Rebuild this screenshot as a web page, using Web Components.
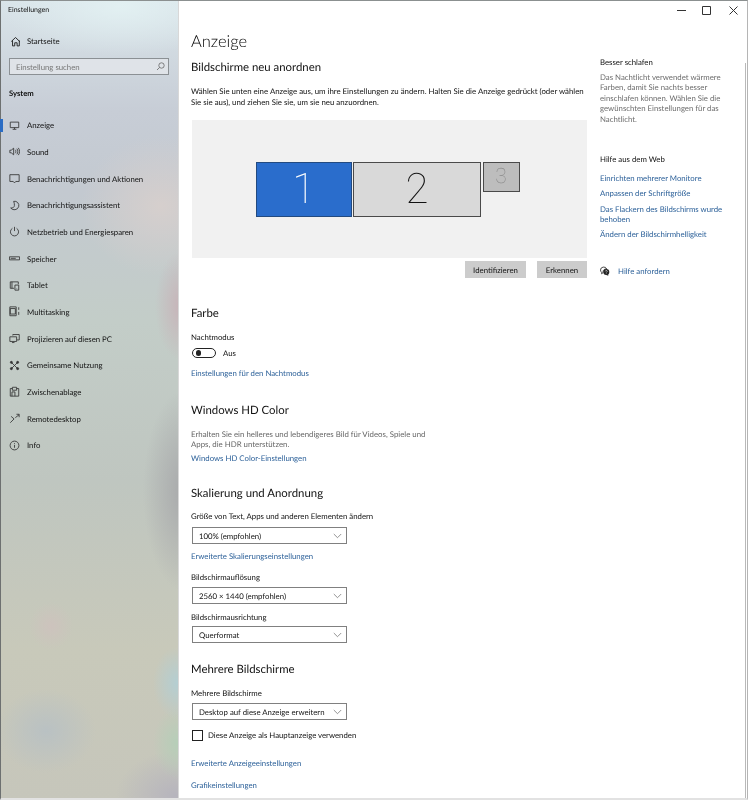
<!DOCTYPE html>
<html lang="de">
<head>
<meta charset="utf-8">
<title>Einstellungen</title>
<style>
  html, body { margin: 0; padding: 0; background: #fff; }
  body { width: 748px; height: 800px; overflow: hidden; font-family: Lato, "Open Sans", sans-serif; text-rendering: geometricPrecision; }
</style>
</head>
<body>
<settings-window>
  <side-nav slot="nav">
    <nav-item icon="display" active>Anzeige</nav-item>
    <nav-item icon="sound">Sound</nav-item>
    <nav-item icon="notify">Benachrichtigungen und Aktionen</nav-item>
    <nav-item icon="moon">Benachrichtigungsassistent</nav-item>
    <nav-item icon="power">Netzbetrieb und Energiesparen</nav-item>
    <nav-item icon="storage">Speicher</nav-item>
    <nav-item icon="tablet">Tablet</nav-item>
    <nav-item icon="multi">Multitasking</nav-item>
    <nav-item icon="project">Projizieren auf diesen PC</nav-item>
    <nav-item icon="share">Gemeinsame Nutzung</nav-item>
    <nav-item icon="clip">Zwischenablage</nav-item>
    <nav-item icon="remote">Remotedesktop</nav-item>
    <nav-item icon="info">Info</nav-item>
  </side-nav>

  <main-pane slot="main">
    <sec-title big style="margin-top:28px">Anzeige</sec-title>
    <sec-title style="margin-top:5px">Bildschirme neu anordnen</sec-title>
    <body-text style="margin-top:10px">Wählen Sie unten eine Anzeige aus, um ihre Einstellungen zu ändern. Halten Sie die Anzeige gedrückt (oder wählen Sie sie aus), und ziehen Sie sie, um sie neu anzuordnen.</body-text>
    <monitor-canvas style="margin-top:13px">
      <monitor-box w="95.5" h="55" active>1</monitor-box>
      <monitor-box w="128" h="55">2</monitor-box>
      <monitor-box w="37" h="30" dim>3</monitor-box>
    </monitor-canvas>
    <button-row style="margin-top:3px">
      <grey-button w="61">Identifizieren</grey-button>
      <grey-button w="50">Erkennen</grey-button>
    </button-row>

    <sec-title style="margin-top:26px">Farbe</sec-title>
    <field-label style="margin-top:8px">Nachtmodus</field-label>
    <toggle-switch style="margin-top:2px">Aus</toggle-switch>
    <text-link style="margin-top:6px">Einstellungen für den Nachtmodus</text-link>

    <sec-title style="margin-top:21px">Windows HD Color</sec-title>
    <body-text muted narrow style="margin-top:9.5px">Erhalten Sie ein helleres und lebendigeres Bild für Videos, Spiele und Apps, die HDR unterstützen.</body-text>
    <text-link style="margin-top:1.5px">Windows HD Color-Einstellungen</text-link>

    <sec-title style="margin-top:19px">Skalierung und Anordnung</sec-title>
    <field-label style="margin-top:7px">Größe von Text, Apps und anderen Elementen ändern</field-label>
    <drop-down style="margin-top:4px">100% (empfohlen)</drop-down>
    <text-link style="margin-top:5px">Erweiterte Skalierungseinstellungen</text-link>
    <field-label style="margin-top:7px">Bildschirmauflösung</field-label>
    <drop-down style="margin-top:3px">2560 × 1440 (empfohlen)</drop-down>
    <field-label style="margin-top:6px">Bildschirmausrichtung</field-label>
    <drop-down style="margin-top:2px">Querformat</drop-down>

    <sec-title style="margin-top:17px">Mehrere Bildschirme</sec-title>
    <field-label style="margin-top:8px">Mehrere Bildschirme</field-label>
    <drop-down style="margin-top:3px">Desktop auf diese Anzeige erweitern</drop-down>
    <check-box style="margin-top:8px">Diese Anzeige als Hauptanzeige verwenden</check-box>
    <text-link style="margin-top:14px">Erweiterte Anzeigeeinstellungen</text-link>
    <text-link style="margin-top:8px">Grafikeinstellungen</text-link>
  </main-pane>

  <help-pane slot="help"></help-pane>
</settings-window>

<script>
  const ICONS = {
    home: '<path d="M1.5 6.5 6.5 1.8l5 4.7M3 5.3v6.4h2.6V8h2.8v3.7H11V5.3"/>',
    display: '<path d="M1.5 2.5h10v6.5h-10zM6.5 9v1.7M4.3 11h4.4"/>',
    sound: '<path d="M1 5h1.6L5.5 2.6v7.8L2.6 8H1zM7.5 4.5c.8 1.2.8 2.8 0 4M9.3 3.2c1.5 2 1.5 4.6 0 6.6M11 2.2c2 2.6 2 6 0 8.6"/>',
    notify: '<path d="M1 2h11v8H8l-1.5 1.7L5 10H1z"/>',
    moon: '<path d="M5.5 1.6A5 5 0 0 1 11.4 8 5.4 5.4 0 0 1 2 9.4c2.4.4 4.2-.6 4.4-3 .1-1.8-.3-3.4-.9-4.8z"/>',
    power: '<path d="M4 2.8a4.8 4.8 0 1 0 5 0M6.5 1v5"/>',
    storage: '<path d="M.5 4.5h12v3.6H.5zM2 6.3h6"/>',
    tablet: '<path d="M6 9.8H1.5V2.2h9.5V5M3.5 9.8V2.2"/><path d="M7 6h4.5v6H7zM9 10.3h.6"/>',
    multi: '<path d="M1 1v10.5M8.5 1v10.5M1.5 3h6v6.5h-6zM1 1h7.5M1 11.5h7.5M11.5 1.5v3M11.5 7v3.5"/>',
    project: '<path d="M4.5 3V1.8h7.6v6.4H9.5M1 4.5h8v5.5H1zM3.5 11.3h3"/>',
    share: '<path d="M2.8 2.8l7.4 7.4M10.2 2.8l-7.4 7.4"/><circle cx="2.8" cy="2.8" r="1.2" fill="currentColor"/><circle cx="10.2" cy="2.8" r="1.2" fill="currentColor"/><circle cx="2.8" cy="10.2" r="1.2" fill="currentColor"/><circle cx="10.2" cy="10.2" r="1.2" fill="currentColor"/>',
    clip: '<path d="M4 3H1.5v9h10V3H9M4 1.5h5V5H4zM6 7H3.5v5M6 7h1v5"/>',
    remote: '<path d="M1.5 11.5l4.5-4.5M2.5 4l3.5 3M7.5 5.5 12 2M8.8 1.5H12V5"/>',
    info: '<circle cx="6.5" cy="6.5" r="5.2"/><path d="M6.5 5.8v3.4M6.5 3.8v1"/>'
  };

  function iconSvg(name, size = 11) {
    return `<svg width="${size}" height="${size}" viewBox="0 0 13 13" fill="none" stroke="currentColor" stroke-width="1">${ICONS[name]}</svg>`;
  }

  // small helper, every element below is the same shape: styles + markup
  function define(tag, css, html) {
    customElements.define(tag, class extends HTMLElement {
      connectedCallback() {
        if (this.shadowRoot) return;
        this.attachShadow({ mode: 'open' });
        this.shadowRoot.innerHTML = `<style>${css}</style>${typeof html === 'function' ? html(this) : html}`;
      }
    });
  }

  define('settings-window', `
    :host { display: flex; width: 748px; height: 800px; box-sizing: border-box; background: #fff; filter: blur(.3px);
            border-top: 1px solid #8b9090; border-left: 1px solid #6d7070; border-right: 1px solid #b5b5b5; border-bottom: 2px solid #e2e2e2; position: relative; }
    .content { flex: 1; display: flex; min-width: 0; }
    .controls { position: absolute; top: 4px; right: 0; display: flex; color: #333; }
    .controls span { width: 25px; height: 11px; display: flex; justify-content: center; align-items: center; }
    .scroll { position: absolute; right: 1px; top: 62px; bottom: 0; width: 1.5px; background: #b9b9b9; }
  `, `
    <slot name="nav"></slot>
    <div class="content"><slot name="main"></slot><slot name="help"></slot></div>
    <div class="controls">
      <span><svg width="9" height="9" viewBox="0 0 9 9" stroke="currentColor" fill="none"><path d="M0 4.5h9"/></svg></span>
      <span><svg width="9" height="9" viewBox="0 0 9 9" stroke="currentColor" fill="none"><path d="M.5.5h8v8h-8z"/></svg></span>
      <span style="width:28px"><svg width="9" height="9" viewBox="0 0 9 9" stroke="currentColor" fill="none"><path d="M.5.5l8 8M8.5.5l-8 8"/></svg></span>
    </div>
    <div class="scroll"></div>
  `);

  define('side-nav', `
    :host { display: flex; flex-direction: column; width: 178px; height: 100%; flex: none; color: #111;
            border-right: 1px solid #d8d8d8; box-sizing: border-box;
            background:
              radial-gradient(22px 24px at 50px 625px, #cdc3bd 0%, rgba(205,195,189,0) 100%),
              radial-gradient(24px 36px at 176px 682px, #b4ced2 0%, rgba(180,206,210,0) 100%),
              radial-gradient(24px 36px at 176px 742px, #b6ceb8 0%, rgba(182,206,184,0) 100%),
              radial-gradient(50px 42px at 45px 730px, #b9c1c3 0%, rgba(185,193,195,0) 100%),
              radial-gradient(60px 45px at 175px 795px, #b6b4bd 0%, rgba(182,180,189,0) 100%),
              radial-gradient(40px 100px at 182px 490px, #a8a9ab 0%, rgba(168,169,171,0) 100%),
              radial-gradient(26px 55px at 180px 305px, #c7b3b8 0%, rgba(199,179,184,0) 100%),
              radial-gradient(80px 70px at 160px 205px, #d6cfcd 0%, rgba(214,207,205,0) 100%),
              radial-gradient(120px 50px at 120px 5px, #e2f0f2 0%, rgba(226,240,242,0) 100%),
              linear-gradient(180deg, #d9e4e9 0, #c7cdd6 110px, #c3c9d0 190px, #c3cdc8 320px, #bfc6c0 480px, #c8c9ba 650px, #c6c6bb 800px); }
    .title { font-size: 7px; line-height: 12px; padding: 3px 0 0 7px; height: 15px; }
    .home { display: flex; align-items: center; height: 14px; margin-top: 15px; padding-left: 9px; gap: 6px; font-size: 7.8px; }
    .search { margin: 10px 0 0 8px; width: 160px; height: 17px; box-sizing: border-box; border: 1.5px solid #8b9094; background: #dfe3e8; display: flex; align-items: center; padding: 0 3px 0 6px; font-size: 7.8px; color: #777; justify-content: space-between; }
    .system { font-weight: 700; font-size: 7.7px; line-height: 12px; margin: 12px 0 0 8px; height: 12px; }
    .items { margin-top: 13px; display: flex; flex-direction: column; }
  `, () => `
    <div class="title">Einstellungen</div>
    <div class="home">${iconSvg('home', 11)}<span>Startseite</span></div>
    <div class="search"><span>Einstellung suchen</span><svg width="9" height="9" viewBox="0 0 9 9" fill="none" stroke="#666" stroke-width=".8"><circle cx="5.5" cy="3.5" r="2.7"/><path d="M3.5 5.5 1 8"/></svg></div>
    <div class="system">System</div>
    <div class="items"><slot></slot></div>
  `);

  define('nav-item', `
    :host { display: flex; align-items: center; height: 26.67px; font-size: 7.8px; position: relative; padding-left: 8px; color: #111; }
    :host([active])::before { content: ""; position: absolute; left: -1px; top: 6.5px; width: 2.5px; height: 13px; background: #2a6cc4; }
    .i { width: 11px; height: 11px; margin-right: 7px; color: #333; display: flex; }
    span { white-space: nowrap; }
  `, el => `<div class="i">${iconSvg(el.getAttribute('icon'))}</div><span><slot></slot></span>`);

  define('main-pane', `
    :host { display: flex; flex-direction: column; width: 396px; margin-left: 12px; flex: none; }
  `, `<slot></slot>`);

  define('sec-title', `
    :host { display: block; font-size: 11.4px; line-height: 18px; color: #111; white-space: nowrap; padding-top: 1px; margin-bottom: -1px; }
    :host([big]) { font-size: 16.5px; line-height: 24px; font-weight: 300; padding-top: 0; margin-bottom: 0; color: #000; }
  `, `<slot></slot>`);

  define('body-text', `
    :host { display: block; font-size: 7.85px; line-height: 10.6px; color: #111; }
    :host([muted]) { color: #666; }
    :host([narrow]) { width: 245px; }
  `, `<slot></slot>`);

  define('field-label', `
    :host { display: block; font-size: 7.8px; line-height: 14px; color: #111; white-space: nowrap; }
  `, `<slot></slot>`);

  define('text-link', `
    :host { display: block; font-size: 7.8px; line-height: 14px; color: #2a5f98; white-space: nowrap; }
  `, `<slot></slot>`);

  define('monitor-canvas', `
    :host { display: flex; height: 138px; width: 395px; margin-left: 1px; background: #f1f1f1; padding: 42px 0 0 64px; box-sizing: border-box; gap: 1.5px; align-items: flex-start; font-family: Roboto, sans-serif; }
  `, `<slot></slot>`);

  define('monitor-box', `
    :host { display: flex; align-items: center; justify-content: center; box-sizing: border-box; border: 1px solid #4a4a4a; background: #d9d9d9; color: #111; font-size: 42px; font-weight: 100; }
    :host([active]) { background: #2a6dcc; color: #fff; border-color: #224a80; }
    :host([dim]) { background: #bdbdbd; color: #8c8c8c; font-size: 21px; }
  `, el => {
    el.style.width = el.getAttribute('w') + 'px';
    el.style.height = el.getAttribute('h') + 'px';
    return `<slot></slot>`;
  });

  define('button-row', `
    :host { display: flex; justify-content: flex-end; gap: 11px; }
  `, `<slot></slot>`);

  define('grey-button', `
    :host { display: flex; align-items: center; justify-content: center; height: 17px; background: #cccccc; font-size: 7.8px; color: #111; }
  `, el => {
    el.style.width = el.getAttribute('w') + 'px';
    return `<slot></slot>`;
  });

  define('toggle-switch', `
    :host { display: flex; align-items: center; height: 14px; font-size: 7.8px; color: #111; gap: 7px; margin-left: 1px; }
    .t { width: 24px; height: 10px; box-sizing: border-box; border: 1px solid #222; border-radius: 5px; display: flex; align-items: center; padding-left: 2.5px; }
    .t i { width: 5.5px; height: 5.5px; border-radius: 50%; background: #222; }
  `, `<div class="t"><i></i></div><span><slot></slot></span>`);

  define('drop-down', `
    :host { display: flex; align-items: center; justify-content: space-between; box-sizing: border-box; width: 155px; height: 17px; margin-left: 1px; border: 1.4px solid #808080; padding: 0 4px 0 6px; font-size: 7.8px; color: #111; background: #fff; white-space: nowrap; }
    svg { flex: none; }
  `, `<span><slot></slot></span><svg width="9" height="6" viewBox="0 0 9 6" fill="none" stroke="#777" stroke-width=".8"><path d="M.8 1 4.5 4.7 8.2 1"/></svg>`);

  define('check-box', `
    :host { display: flex; align-items: center; height: 14px; font-size: 7.8px; color: #111; gap: 5px; margin-left: 1px; white-space: nowrap; }
    i { display: block; width: 11px; height: 11px; box-sizing: border-box; border: 1.2px solid #222; }
  `, `<i></i><span><slot></slot></span>`);

  define('help-pane', `
    :host { display: block; margin-left: 13px; width: 126px; font-size: 7.8px; }
    h3 { margin: 0; font-size: 7.8px; font-weight: 400; line-height: 12px; color: #111; }
    p { margin: 4px 0 0; color: #6c6c6c; font-size: 7.8px; line-height: 10.4px; }
    a { display: block; color: #2a5f98; line-height: 10.6px; }
    .links { margin-top: 8px; display: flex; flex-direction: column; gap: 4.7px; }
    .ask { display: flex; align-items: center; gap: 8px; margin-top: 25.5px; color: #2a5f98; }
  `, `
    <h3 style="margin-top:55px">Besser schlafen</h3>
    <p>Das Nachtlicht verwendet wärmere Farben, damit Sie nachts besser einschlafen können. Wählen Sie die gewünschten Einstellungen für das Nachtlicht.</p>
    <h3 style="margin-top:29px">Hilfe aus dem Web</h3>
    <div class="links">
      <a>Einrichten mehrerer Monitore</a>
      <a>Anpassen der Schriftgröße</a>
      <a>Das Flackern des Bildschirms wurde behoben</a>
      <a>Ändern der Bildschirmhelligkeit</a>
    </div>
    <div class="ask">
      <svg width="10" height="10" viewBox="0 0 10 10"><path d="M.5 4a3.2 3 0 0 1 6.2-1A3 3 0 0 0 3 6v.7L1.6 7.8V6.3A3 3 0 0 1 .5 4z" fill="none" stroke="#222" stroke-width=".8"/><circle cx="6.3" cy="6" r="3" fill="#222"/><path d="M6.3 9l2 .8-.3-2z" fill="#222"/><path d="M5.3 5.3c.1-1 2-1 2 0 0 .7-1 .6-1 1.3M6.3 7.3v.5" fill="none" stroke="#fff" stroke-width=".6"/></svg>
      <span>Hilfe anfordern</span>
    </div>
  `);
</script>
</body>
</html>
